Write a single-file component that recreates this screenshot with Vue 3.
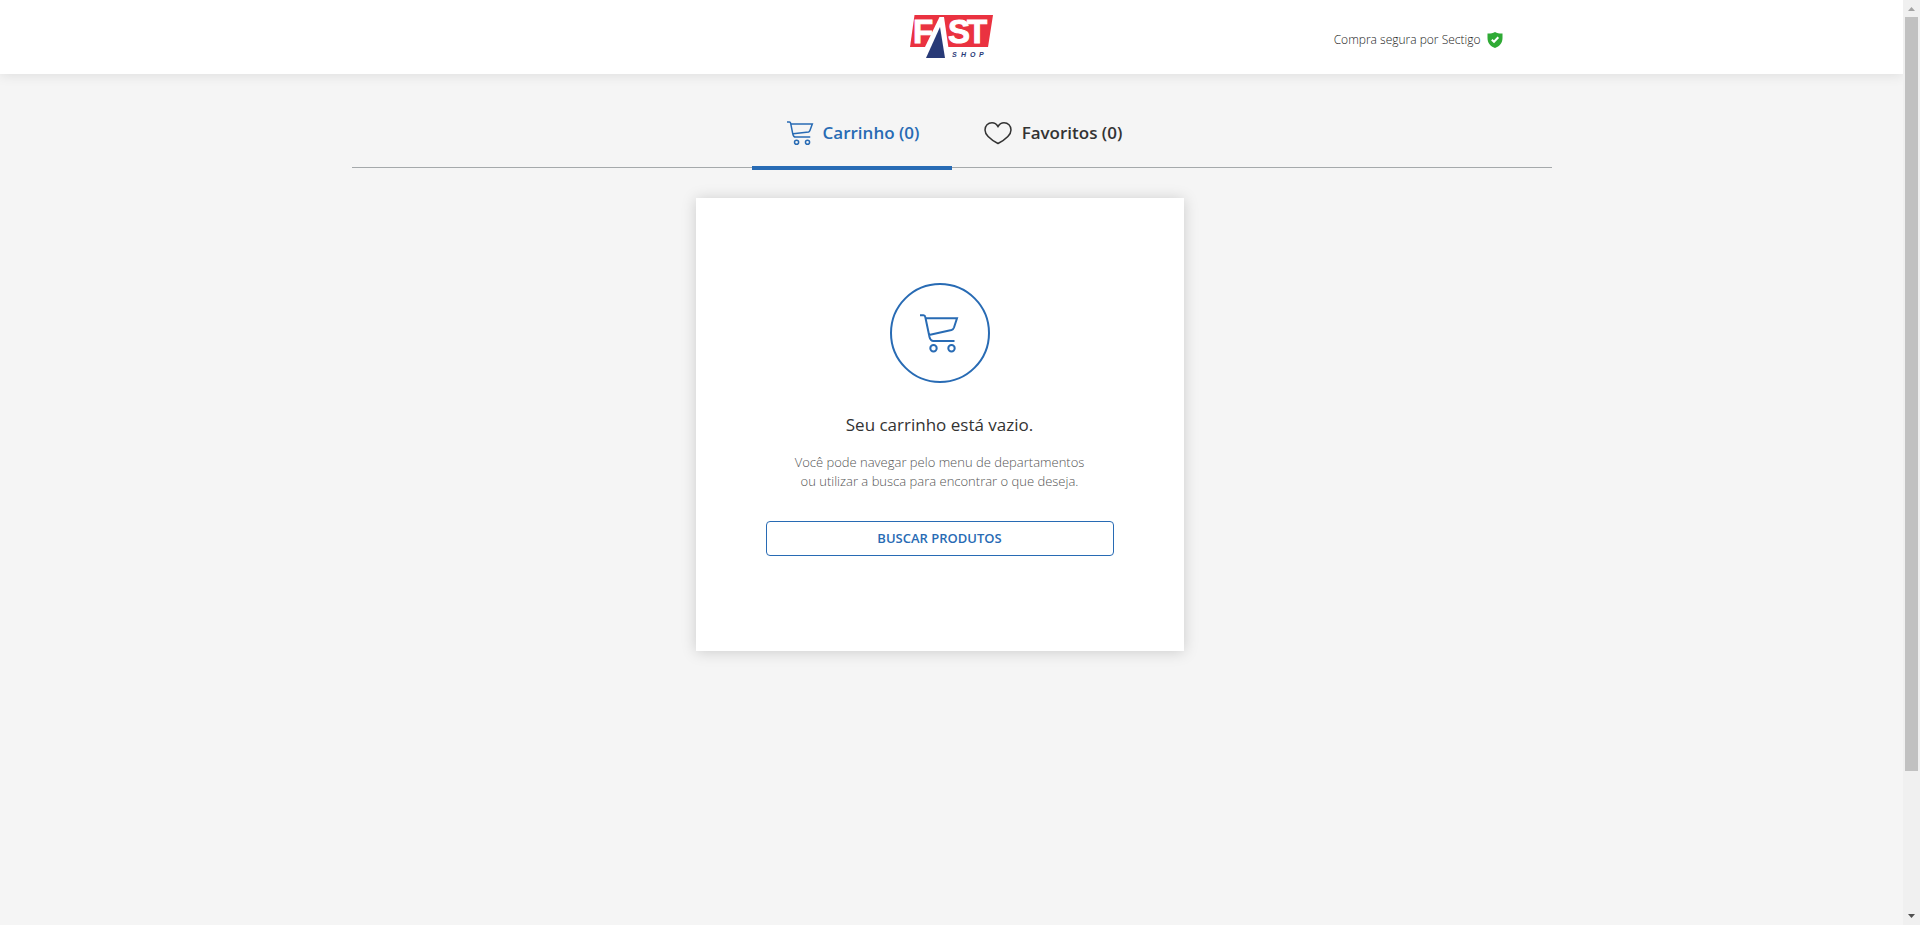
<script setup>
import { ref } from 'vue'

const active = ref('cart')
</script>

<template>
  <div class="shell">
    <div class="page">
      <header class="header">
        <div class="header-inner">
          <a class="logo" href="#" aria-label="Fast Shop">
            <svg width="84" height="46" viewBox="20 14 84 46" aria-hidden="true">
              <path d="M24.5 15H103L98 47H20z" fill="#ea3240" />
              <g class="logo-big">
                <text x="23" y="43">F</text>
                <text x="58" y="43">S</text>
                <text x="77" y="43">T</text>
              </g>
              <path d="M49.5 17H54L58.5 48H34.5z" fill="#fff" />
              <path d="M50 27L55 58H36z" fill="#283a77" />
              <text class="logo-small" x="62 71 80 89" y="57">SHOP</text>
            </svg>
          </a>
          <div class="secure">
            <span>Compra segura por Sectigo</span>
            <svg width="16" height="16" viewBox="0 0 16 16" aria-hidden="true">
              <path d="M8 0C10.500 1.300 13 1.700 15.500 1.500V6C15.500 11 12.500 14.500 8 16C3.500 14.500.5 11 .5 6V1.500C3 1.700 5.500 1.300 8 0z" fill="#2faa35" />
              <path d="M4.800 7.700L7 9.800L11.300 5.300" fill="none" stroke="#fff" stroke-width="2" />
            </svg>
          </div>
        </div>
      </header>

      <main class="container">
        <nav class="tabs" aria-label="Carrinho e favoritos">
          <button type="button" class="tab" :class="{ active: active === 'cart' }" @click="active = 'cart'">
            <svg width="26" height="24" viewBox="0 0 38 35" class="icon cart-small" aria-hidden="true">
              <path d="M0 1.500H3.500Q5 1.500 5.300 3L8.500 19Q9.500 23.500 12.500 23.500H34M5.500 4.500H37L33.500 14Q33 15.500 31.500 16L9 18.500" />
              <circle cx="14" cy="31" r="3" /><circle cx="30" cy="31" r="3" />
            </svg>
            Carrinho (0)
          </button>
          <button type="button" class="tab" :class="{ active: active === 'favorites' }" @click="active = 'favorites'">
            <svg width="28" height="22" viewBox="0 0 28 22" class="icon heart" aria-hidden="true">
              <path d="M14 4.500C12.500 2 10.500 .8 8 .8C4 .8 1 3.800 1 8C1 13.500 8 18.300 14 21.500C20 18.300 27 13.500 27 8C27 3.800 24 .8 20 .8C17.500 .8 15.500 2 14 4.500z" />
            </svg>
            Favoritos (0)
          </button>
        </nav>

        <div class="content">
          <section class="card">
            <div class="circle">
              <svg width="38" height="38" viewBox="0 0 38 38" class="icon cart-large" aria-hidden="true">
                <path d="M0 1.200H3.500Q5 1.200 5.300 3L9.500 23Q10.500 27 13.500 27H34.500M5.500 4.200H37L34 13.500Q33.300 15.500 31.500 16L9 21" />
                <circle cx="13.500" cy="34.300" r="3.200" /><circle cx="31.500" cy="34.300" r="3.200" />
              </svg>
            </div>
            <h1>Seu carrinho está vazio.</h1>
            <p>Você pode navegar pelo menu de departamentos<br />ou utilizar a busca para encontrar o que deseja.</p>
            <button type="button" class="search">BUSCAR PRODUTOS</button>
          </section>
        </div>
      </main>
    </div>

    <div class="scrollbar" aria-hidden="true">
      <svg class="arrow" width="17" height="17" viewBox="0 0 17 17"><path d="M5 11L8.500 7L12 11z" fill="#a3a3a3" /></svg>
      <div class="track"><div class="thumb"></div></div>
      <svg class="arrow" width="17" height="17" viewBox="0 0 17 17"><path d="M5 6L8.500 10L12 6z" fill="#505050" /></svg>
    </div>
  </div>
</template>

<style>
body {
  margin: 0;
  background: #f5f5f5;
}
</style>

<style scoped>
.shell {
  display: flex;
  height: 100vh;
  font-family: "Open Sans", "Noto Sans", sans-serif;
  color: #333;
  background: #f5f5f5;
}
.page {
  flex: 1;
  min-width: 0;
  overflow: hidden;
}
.header {
  background: #fff;
  box-shadow: 0 1px 12px rgba(0, 0, 0, 0.1);
}
.header-inner {
  display: grid;
  grid-template-columns: 1fr auto 1fr;
  max-width: 1200px;
  height: 74px;
  margin: 0 auto;
}
.logo {
  grid-column: 2;
  padding-top: 14px;
}
.logo svg {
  display: block;
}
.logo-big {
  font: bold 33px "Liberation Sans", sans-serif;
  fill: #fff;
  stroke: #fff;
  stroke-width: 1;
}
.logo-small {
  font: italic bold 7px "Liberation Sans", sans-serif;
  fill: #283a77;
}
.secure {
  display: flex;
  align-items: center;
  justify-content: flex-end;
  gap: 6px;
  padding: 5px 49px 0 0;
  font-size: 12px;
  font-weight: 300;
  color: #222;
}
.container {
  max-width: 1200px;
  margin: 0 auto;
}
.tabs {
  display: flex;
  justify-content: center;
  height: 93px;
  border-bottom: 1px solid #a5a9ab;
}
.tab {
  display: flex;
  align-items: center;
  justify-content: center;
  gap: 10px;
  width: 200px;
  height: 96px;
  box-sizing: border-box;
  padding: 24px 0 0 3px;
  border: 0;
  border-bottom: 4px solid transparent;
  background: none;
  color: #333;
  font: 600 17px "Open Sans", sans-serif;
  cursor: pointer;
}
.tab.active {
  color: #286bb4;
  border-bottom-color: #286bb4;
}
.icon {
  fill: none;
  stroke: currentColor;
  overflow: visible;
}
.tab .icon {
  margin-top: 2px;
}
.cart-small {
  stroke-width: 2.2;
}
.cart-large {
  stroke-width: 2;
}
.heart {
  stroke-width: 1.5;
}
.content {
  display: flex;
  justify-content: center;
  padding: 30px 24px 0 0;
}
.card {
  display: flex;
  flex-direction: column;
  align-items: center;
  box-sizing: border-box;
  width: 488px;
  padding: 85px 70px 95px;
  background: #fff;
  box-shadow: 0 1px 14px rgba(0, 0, 0, 0.17);
}
.circle {
  display: grid;
  place-items: center;
  box-sizing: border-box;
  width: 100px;
  height: 100px;
  padding: 0 2px 0 0;
  border: 2px solid #286bb4;
  border-radius: 50%;
  color: #286bb4;
}
h1 {
  margin: 30px 0 16px;
  font-size: 17px;
  line-height: 24px;
  font-weight: 400;
}
p {
  margin: 0 0 30px;
  font-size: 13px;
  line-height: 19px;
  font-weight: 300;
  color: #555;
  text-align: center;
}
.search {
  width: 100%;
  height: 35px;
  padding: 0 0 2px;
  border: 1px solid #286bb4;
  border-radius: 4px;
  background: #fff;
  color: #286bb4;
  font: 600 13px "Open Sans", sans-serif;
  cursor: pointer;
}
.scrollbar {
  display: flex;
  flex-direction: column;
  width: 17px;
  background: #f0f0f0;
}
.arrow {
  display: block;
}
.track {
  flex: 1;
  padding: 0 2px;
}
.thumb {
  height: 84.6%;
  background: #c1c1c1;
}
</style>
